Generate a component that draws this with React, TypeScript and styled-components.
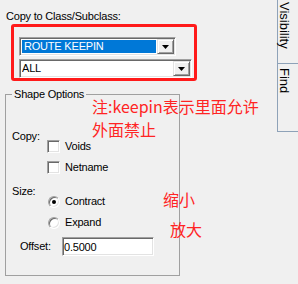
import React from "react";
import styled, { createGlobalStyle } from "styled-components";

const GlobalStyle = createGlobalStyle`
  html, body { margin: 0; padding: 0; background: #f0f0f0; }
  body {
    font-family: "Liberation Sans", Arial, sans-serif;
    font-size: 11px;
    line-height: 13px;
    color: #000;
  }
  * { box-sizing: border-box; }
`;

const Page = styled.div`
  position: relative;
  display: flex;
  width: 298px;
  height: 284px;
  overflow: hidden;
  background: #f0f0f0;
`;

const LeftPane = styled.div`
  flex: 1;
  display: flex;
  flex-direction: column;
  align-items: flex-start;
  padding: 10px 0 0 5px;
  letter-spacing: -0.2px;
`;

const Title = styled.div`
  margin-left: 1px;
  white-space: nowrap;
`;

const Highlight = styled.div`
  margin: 1px 0 0 6px;
  width: 186px;
  border: 3px solid #ff1a1a;
  border-radius: 3px;
  padding: 10px 0 0 5px;
  display: flex;
  flex-direction: column;
  gap: 3px;
`;

const Combo = styled.div<{ $w: number }>`
  width: ${(p) => p.$w}px;
  height: 19px;
  display: flex;
  background: #fff;
  border: 1px solid;
  border-color: #a0a0a0 #fff #fff #a0a0a0;
  box-shadow: inset 1px 1px #696969, inset -1px -1px #e3e3e3;
  padding: 1px;
`;

const ComboField = styled.div<{ $selected?: boolean }>`
  flex: 1;
  margin: 1px;
  padding-left: ${(p) => (p.$selected ? 2 : 0)}px;
  background: ${(p) => (p.$selected ? "#0078d7" : "#fff")};
  color: ${(p) => (p.$selected ? "#fff" : "#000")};
  line-height: 13px;
  white-space: nowrap;
  overflow: hidden;
`;

const DropButton = styled.div`
  width: 17px;
  height: 15px;
  flex: none;
  background: #f0f0f0;
  border: 1px solid;
  border-color: #e3e3e3 #696969 #696969 #e3e3e3;
  box-shadow: inset 1px 1px #fff, inset -1px -1px #a0a0a0;
  display: flex;
  align-items: center;
  justify-content: center;
`;

const Group = styled.fieldset`
  margin: 7px 0 0 0;
  padding: 29px 0 19px 0;
  width: 175px;
  min-width: 0;
  border: 1px solid #a0a0a0;
`;

const Legend = styled.legend`
  margin-left: 6px;
  padding: 0 2px;
  line-height: 13px;
`;

const Section = styled.div<{ $mt: number }>`
  display: grid;
  grid-template-columns: 35px auto;
  align-items: start;
  padding-left: 6px;
  margin-top: ${(p) => p.$mt}px;
`;

const SectionLabel = styled.div`
  line-height: 13px;
`;

const Options = styled.div`
  display: flex;
  flex-direction: column;
  gap: 8px;
  padding-top: 10px;
`;

const Option = styled.label`
  display: flex;
  align-items: center;
  gap: 5px;
  height: 13px;
  white-space: nowrap;
`;

const CheckBox = styled.span`
  width: 13px;
  height: 13px;
  flex: none;
  background: #fff;
  border: 1px solid;
  border-color: #a0a0a0 #fff #fff #a0a0a0;
  box-shadow: inset 1px 1px #696969, inset -1px -1px #e3e3e3;
`;

const Radio = styled.span<{ $checked?: boolean }>`
  position: relative;
  width: 12px;
  height: 12px;
  margin-left: 1px;
  flex: none;
  border-radius: 50%;
  background: #fff;
  border: 1px solid;
  border-color: #a0a0a0 #fff #fff #a0a0a0;
  box-shadow: inset 1px 1px #696969, inset -1px -1px #e3e3e3;
  &::after {
    content: "";
    display: ${(p) => (p.$checked ? "block" : "none")};
    position: absolute;
    left: 3px;
    top: 3px;
    width: 4px;
    height: 4px;
    border-radius: 50%;
    background: #000;
  }
`;

const OffsetRow = styled.div`
  display: flex;
  align-items: center;
  padding-left: 14px;
  margin-top: 8px;
`;

const OffsetLabel = styled.span`
  width: 42px;
`;

const TextInput = styled.input`
  width: 92px;
  height: 19px;
  margin: 0;
  padding: 0 0 0 1px;
  font: inherit;
  letter-spacing: inherit;
  color: #000;
  background: #fff;
  border: 1px solid;
  border-color: #a0a0a0 #fff #fff #a0a0a0;
  box-shadow: inset 1px 1px #696969, inset -1px -1px #e3e3e3;
  outline: none;
`;

const TabStrip = styled.div`
  width: 22px;
  flex: none;
  display: flex;
  flex-direction: column;
  padding-left: 1px;
`;

const Tab = styled.div<{ $h: number; $pt: number }>`
  height: ${(p) => p.$h}px;
  border-left: 1px solid #8ea2b8;
  border-bottom: 1px solid #8ea2b8;
  writing-mode: vertical-rl;
  font-family: "Liberation Sans", Arial, sans-serif;
  font-size: 13px;
  line-height: 13px;
  padding-top: ${(p) => p.$pt}px;
  padding-right: 7px;
  color: #000;
`;

const Note = styled.div<{ $x: number; $y: number }>`
  position: absolute;
  left: ${(p) => p.$x}px;
  top: ${(p) => p.$y}px;
  font-family: "Noto Sans CJK SC", "Noto Sans", sans-serif;
  font-size: 16px;
  line-height: 23px;
  color: #ff2424;
  white-space: nowrap;
`;

const Arrow = () => (
  <svg width="7" height="4" viewBox="0 0 7 4">
    <polygon points="0,0 7,0 3.5,4" fill="#000" />
  </svg>
);

export default function App() {
  return (
    <>
      <GlobalStyle />
      <Page>
        <LeftPane>
          <Title>Copy to Class/Subclass:</Title>
          <Highlight>
            <Combo $w={157}>
              <ComboField $selected>ROUTE KEEPIN</ComboField>
              <DropButton>
                <Arrow />
              </DropButton>
            </Combo>
            <Combo $w={173}>
              <ComboField>ALL</ComboField>
              <DropButton>
                <Arrow />
              </DropButton>
            </Combo>
          </Highlight>
          <Group>
            <Legend>Shape Options</Legend>
            <Section $mt={0}>
              <SectionLabel>Copy:</SectionLabel>
              <Options>
                <Option>
                  <CheckBox />
                  Voids
                </Option>
                <Option>
                  <CheckBox />
                  Netname
                </Option>
              </Options>
            </Section>
            <Section $mt={11}>
              <SectionLabel>Size:</SectionLabel>
              <Options>
                <Option>
                  <Radio $checked />
                  Contract
                </Option>
                <Option>
                  <Radio />
                  Expand
                </Option>
              </Options>
            </Section>
            <OffsetRow>
              <OffsetLabel>Offset:</OffsetLabel>
              <TextInput readOnly defaultValue="0.5000" />
            </OffsetRow>
          </Group>
        </LeftPane>
        <TabStrip>
          <Tab $h={64} $pt={2}>Visibility</Tab>
          <Tab $h={68} $pt={4}>Find</Tab>
        </TabStrip>
        <Note $x={92} $y={95}>
          注:keepin表示里面允许
          <br />
          外面禁止
        </Note>
        <Note $x={163} $y={188}>缩小</Note>
        <Note $x={170} $y={218}>放大</Note>
      </Page>
    </>
  );
}
